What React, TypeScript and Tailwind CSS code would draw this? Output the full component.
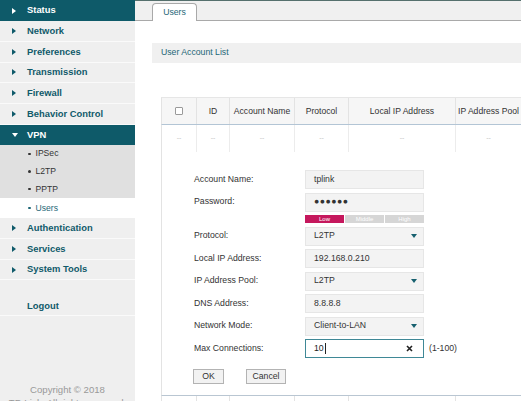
import React from "react"

const teal = "text-[#0f5a6a]"

const menuTop = ["Network", "Preferences", "Transmission", "Firewall", "Behavior Control"]
const menuBottom = ["Authentication", "Services", "System Tools"]
const vpnItems = ["IPSec", "L2TP", "PPTP"]

const columns = [
    { label: "", w: "w-[35px]" },
    { label: "ID", w: "w-[33px]" },
    { label: "Account Name", w: "w-[65px]" },
    { label: "Protocol", w: "w-[54px]" },
    { label: "Local IP Address", w: "w-[107px]" },
    { label: "IP Address Pool", w: "w-[66px]" },
    { label: "", w: "w-[90px]" },
]

const ArrowRight = () => (
    <svg width="4" height="6" viewBox="0 0 4 6" className="shrink-0">
        <path d="M0 0L4 3L0 6Z" fill="currentColor" />
    </svg>
)

const ArrowDown = ({ className = "" }: { className?: string }) => (
    <svg width="6" height="4" viewBox="0 0 6 4" className={`shrink-0 ${className}`}>
        <path d="M0 0H6L3 4Z" fill="currentColor" />
    </svg>
)

const MenuRow = ({ label }: { label: string }) => (
    <div className={`flex h-[20.8px] items-center border-b border-[#fafafa] pl-[12px] ${teal} text-[9.4px] font-bold`}>
        <ArrowRight />
        <span className="ml-[11px]">{label}</span>
    </div>
)

const Sidebar = () => (
    <aside className="h-[401px] w-[135px] shrink-0 overflow-hidden bg-[#efefef]">
        <div className="flex h-[21px] items-center bg-[#0e5a69] pl-[12px] text-[9.4px] font-bold text-white">
            <ArrowRight />
            <span className="ml-[11px]">Status</span>
        </div>
        {menuTop.map((m) => (
            <MenuRow key={m} label={m} />
        ))}
        <div className="flex h-[20px] items-center bg-[#0e5a69] pl-[12px] text-[9.4px] font-bold text-white">
            <ArrowDown className="text-white" />
            <span className="ml-[9px]">VPN</span>
        </div>
        <div className="bg-[#e0e0e0]">
            {vpnItems.map((s) => (
                <div key={s} className="flex h-[17.7px] items-center pl-[28px] text-[8.6px] text-[#333]">
                    <span className="h-[2.5px] w-[2.5px] rounded-full bg-[#333]" />
                    <span className="ml-[5px]">{s}</span>
                </div>
            ))}
            <div className="flex h-[20px] items-center bg-white pl-[28px] text-[8.6px] text-[#1d6676]">
                <span className="h-[2.5px] w-[2.5px] rounded-full bg-[#1d6676]" />
                <span className="ml-[5px]">Users</span>
            </div>
        </div>
        {menuBottom.map((m) => (
            <MenuRow key={m} label={m} />
        ))}
        <div className="mt-[16px] flex h-[20px] items-center border-b border-[#fafafa] pl-[27px] text-[9.4px] font-bold text-[#0f5a6a]">
            Logout
        </div>
        <div className="mt-[67px] text-center text-[9.6px] leading-[13px] text-[#999]">
            <div>Copyright © 2018</div>
            <div>TP-Link. All rights reserved.</div>
        </div>
    </aside>
)

const Field = ({ label, children }: { label: string; children: React.ReactNode }) => (
    <div className="flex h-[19px] items-center">
        <div className="w-[111px] shrink-0 text-[#333]">{label}</div>
        {children}
    </div>
)

const TextBox = ({ value, bold = false }: { value: string; bold?: boolean }) => (
    <div className={`flex h-[19px] w-[119px] items-center border border-[#e6e6e6] bg-[#f3f3f3] pl-[8px] text-[#333] ${bold ? "font-bold tracking-[0.5px]" : ""}`}>
        {value}
    </div>
)

const SelectBox = ({ value }: { value: string }) => (
    <div className="flex h-[19px] w-[119px] items-center justify-between border border-[#e6e6e6] bg-[#f3f3f3] pl-[8px] pr-[6px] text-[#333]">
        <span>{value}</span>
        <ArrowDown className="text-[#17606f]" />
    </div>
)

const UserForm = () => (
    <div className="h-[244px] border-b border-l border-b-[#b9c6d2] border-l-[#e3e3e3] pl-[32px] pt-[18px] text-[8.7px]">
        <div className="flex flex-col gap-[3.5px]">
            <Field label="Account Name:">
                <TextBox value="tplink" />
            </Field>
            <Field label="Password:">
                <TextBox value="●●●●●●" bold />
            </Field>
            <div className="flex">
                <div className="w-[111px] shrink-0" />
                <div className="grid h-[8px] w-[119px] grid-cols-3 gap-px text-center text-[6px] leading-[8px] text-white">
                    <div className="bg-[#c5185d]">Low</div>
                    <div className="bg-[#d6d6d6]">Middle</div>
                    <div className="bg-[#d6d6d6]">High</div>
                </div>
            </div>
            <Field label="Protocol:">
                <SelectBox value="L2TP" />
            </Field>
            <Field label="Local IP Address:">
                <TextBox value="192.168.0.210" />
            </Field>
            <Field label="IP Address Pool:">
                <SelectBox value="L2TP" />
            </Field>
            <Field label="DNS Address:">
                <TextBox value="8.8.8.8" />
            </Field>
            <Field label="Network Mode:">
                <SelectBox value="Client-to-LAN" />
            </Field>
            <Field label="Max Connections:">
                <div className="flex h-[19px] w-[119px] items-center justify-between border border-[#3f8896] bg-white pl-[8px] pr-[10px] text-[#222]">
                    <span className="flex items-center">
                        10
                        <span className="ml-px h-[11px] w-px bg-[#222]" />
                    </span>
                    <svg width="7" height="7" viewBox="0 0 7 7">
                        <path d="M1 1L6 6M6 1L1 6" stroke="#222" strokeWidth="1.6" />
                    </svg>
                </div>
                <span className="ml-[5px] text-[#333]">(1-100)</span>
            </Field>
        </div>
        <div className="mt-[10.5px] flex gap-[22px]">
            <button className="-ml-px h-[15px] w-[31px] border border-[#b3b3b3] bg-[#f2f2f2] text-[8.7px] text-[#333]">
                OK
            </button>
            <button className="h-[15px] w-[40px] border border-[#b3b3b3] bg-[#f2f2f2] text-[8.7px] text-[#333]">
                Cancel
            </button>
        </div>
    </div>
)

const Table = () => (
    <div className="ml-[9px] mt-[34px] w-[450px] whitespace-nowrap text-[8.6px]">
        <div className="flex h-[28px] border-b border-l border-t border-b-[#b3c5d5] border-l-[#e3e3e3] border-t-[#e6e6e6] bg-[#f6f6f6] text-[#333]">
            {columns.map((c, i) => (
                <div key={i} className={`${c.w} flex shrink-0 items-center justify-center border-r border-[#e3e3e3]`}>
                    {i === 0 ? (
                        <span className="h-[8px] w-[8px] rounded-[1px] border border-[#9a9a9a] bg-white" />
                    ) : (
                        c.label
                    )}
                </div>
            ))}
        </div>
        <div className="flex h-[27px] border-l border-[#e3e3e3] text-[7px] text-[#c4c4c4]">
            {columns.map((c, i) => (
                <div key={i} className={`${c.w} flex shrink-0 items-center justify-center border-r border-[#ececec]`}>
                    {c.label || i === 0 ? "--" : ""}
                </div>
            ))}
        </div>
        <UserForm />
        <div className="flex h-[27px] border-l border-[#e3e3e3]">
            {columns.map((c, i) => (
                <div key={i} className={`${c.w} shrink-0 border-r border-[#e3e3e3]`} />
            ))}
        </div>
    </div>
)

export default function App() {
    return (
        <div className="flex h-[401px] w-[521px] overflow-hidden bg-white font-['Liberation_Sans',Arial,sans-serif]">
            <Sidebar />
            <main className="flex min-w-0 flex-1 flex-col overflow-hidden">
                <div className="h-px shrink-0 bg-[#55706d]" />
                <div className="flex h-[20px] shrink-0 items-end border-b border-[#a9a9a9] bg-[#f0f0f0] pl-[17px]">
                    <div className="-mb-px flex h-[18px] w-[45px] items-center justify-center rounded-t-[4px] border border-b-0 border-[#a9a9a9] bg-white text-[8.7px] text-[#1d6676]">
                        Users
                    </div>
                </div>
                <div className="pl-[17px]">
                    <div className="mt-[22px] flex h-[20px] items-center bg-[#f0f0f0] pl-[9px] text-[8.7px] text-[#1d6676]">
                        User Account List
                    </div>
                    <Table />
                </div>
            </main>
        </div>
    )
}
